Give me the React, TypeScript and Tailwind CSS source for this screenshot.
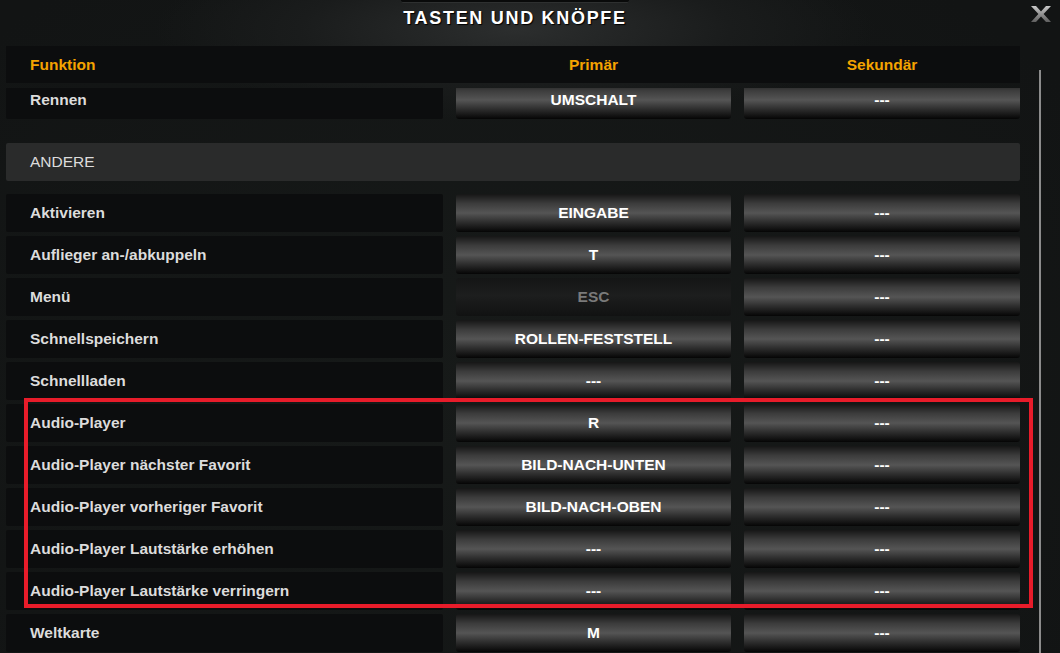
import React from 'react';

type Binding = {
  name: string;
  primary: string;
  secondary: string;
  disabled?: boolean;
};

const andere: Binding[] = [
  { name: 'Aktivieren', primary: 'EINGABE', secondary: '---' },
  { name: 'Auflieger an-/abkuppeln', primary: 'T', secondary: '---' },
  { name: 'Menü', primary: 'ESC', secondary: '---', disabled: true },
  { name: 'Schnellspeichern', primary: 'ROLLEN-FESTSTELL', secondary: '---' },
  { name: 'Schnellladen', primary: '---', secondary: '---' },
  { name: 'Audio-Player', primary: 'R', secondary: '---' },
  { name: 'Audio-Player nächster Favorit', primary: 'BILD-NACH-UNTEN', secondary: '---' },
  { name: 'Audio-Player vorheriger Favorit', primary: 'BILD-NACH-OBEN', secondary: '---' },
  { name: 'Audio-Player Lautstärke erhöhen', primary: '---', secondary: '---' },
  { name: 'Audio-Player Lautstärke verringern', primary: '---', secondary: '---' },
  { name: 'Weltkarte', primary: 'M', secondary: '---' },
];

const KeyButton: React.FC<{ label: string; disabled?: boolean }> = ({ label, disabled }) => (
  <div
    className={`h-full flex items-center justify-center rounded-[3px] text-[15.5px] font-bold ${
      disabled
        ? 'bg-[linear-gradient(to_bottom,#141515_0%,#1d1e1e_45%,#111212_100%)] text-[#7a7a7a]'
        : 'bg-[linear-gradient(to_bottom,#161616_0%,#3c3c3c_25%,#555555_50%,#2c2c2c_75%,#050505_100%)] text-white'
    }`}
  >
    {label}
  </div>
);

const Row: React.FC<{ item: Binding; className?: string }> = ({ item, className = '' }) => (
  <div className={`grid grid-cols-[437px_275px_276px] gap-x-[13px] h-[38px] ${className}`}>
    <div className="bg-[#0c0d0e] rounded-[2px] flex items-center pl-[24px] text-[15.5px] font-bold text-[#dcdcdc]">
      {item.name}
    </div>
    <KeyButton label={item.primary} disabled={item.disabled} />
    <KeyButton label={item.secondary} />
  </div>
);

export default function App() {
  return (
    <div
      className="relative w-[1060px] h-[653px] overflow-hidden bg-[#131516] bg-[radial-gradient(ellipse_360px_90px_at_515px_30px,#2c2e2e_0%,#1a1c1c_60%,transparent_100%),radial-gradient(ellipse_700px_500px_at_500px_380px,#171a19_0%,#121414_100%)]"
      style={{ fontFamily: '"Liberation Sans", Arial, sans-serif' }}
    >
      {/* Title */}
      <div className="relative h-[46px] flex flex-col items-center pr-[30px]">
        <div className="w-[228px] h-[3px] bg-[#090a0a] border-b border-[#2e3030] rounded-b-[2px]" />
        <div className="mt-[2px] text-[18px] font-bold tracking-[1.7px] text-white [text-shadow:1px_1px_1px_#000]">
          TASTEN UND KNÖPFE
        </div>
        <svg className="absolute right-[8px] top-[6px]" width="22" height="16" viewBox="0 0 22 16">
          <defs>
            <linearGradient id="xg" x1="0" y1="0" x2="0" y2="1">
              <stop offset="0" stopColor="#c9c9c9" />
              <stop offset="1" stopColor="#5e5e5e" />
            </linearGradient>
          </defs>
          <path d="M1 0 H6 L11 5.5 L16 0 H21 L13.6 8 L21 16 H16 L11 10.5 L6 16 H1 L8.4 8 Z" fill="url(#xg)" />
        </svg>
      </div>

      <div className="flex pl-[6px] h-[607px]">
        <div className="w-[1014px] shrink-0">
          {/* Column header */}
          <div className="grid grid-cols-[437px_275px_276px] gap-x-[13px] h-[37px] bg-[#0c0d0e] text-[15.5px] font-bold text-[#f5a300]">
            <div className="flex items-center pl-[24px]">Funktion</div>
            <div className="flex items-center justify-center">Primär</div>
            <div className="flex items-center justify-center">Sekundär</div>
          </div>

          {/* List */}
          <div className="mt-[5px] h-[565px] overflow-hidden">
            <Row item={{ name: 'Rennen', primary: 'UMSCHALT', secondary: '---' }} className="-mt-[7px]" />

            <div className="mt-[24px] h-[38px] bg-[#2a2b2b] rounded-[2px] flex items-center pl-[24px] text-[15.5px] text-[#dcdcdc]">
              ANDERE
            </div>

            <div className="mt-[13px] flex flex-col gap-[4px]">
              {andere.map((item) => (
                <Row key={item.name} item={item} />
              ))}
            </div>
          </div>
        </div>

        {/* Scrollbar track */}
        <div className="ml-[19px] pt-[24px] w-[2px] shrink-0 flex flex-col">
          <div className="flex-1 w-[2px] bg-[#8c8c8c]" />
        </div>
      </div>

      {/* Highlight box */}
      <div className="absolute left-[24px] top-[398px] w-[1009px] h-[210px] border-[4px] border-[#e81c2a] pointer-events-none" />
    </div>
  );
}
